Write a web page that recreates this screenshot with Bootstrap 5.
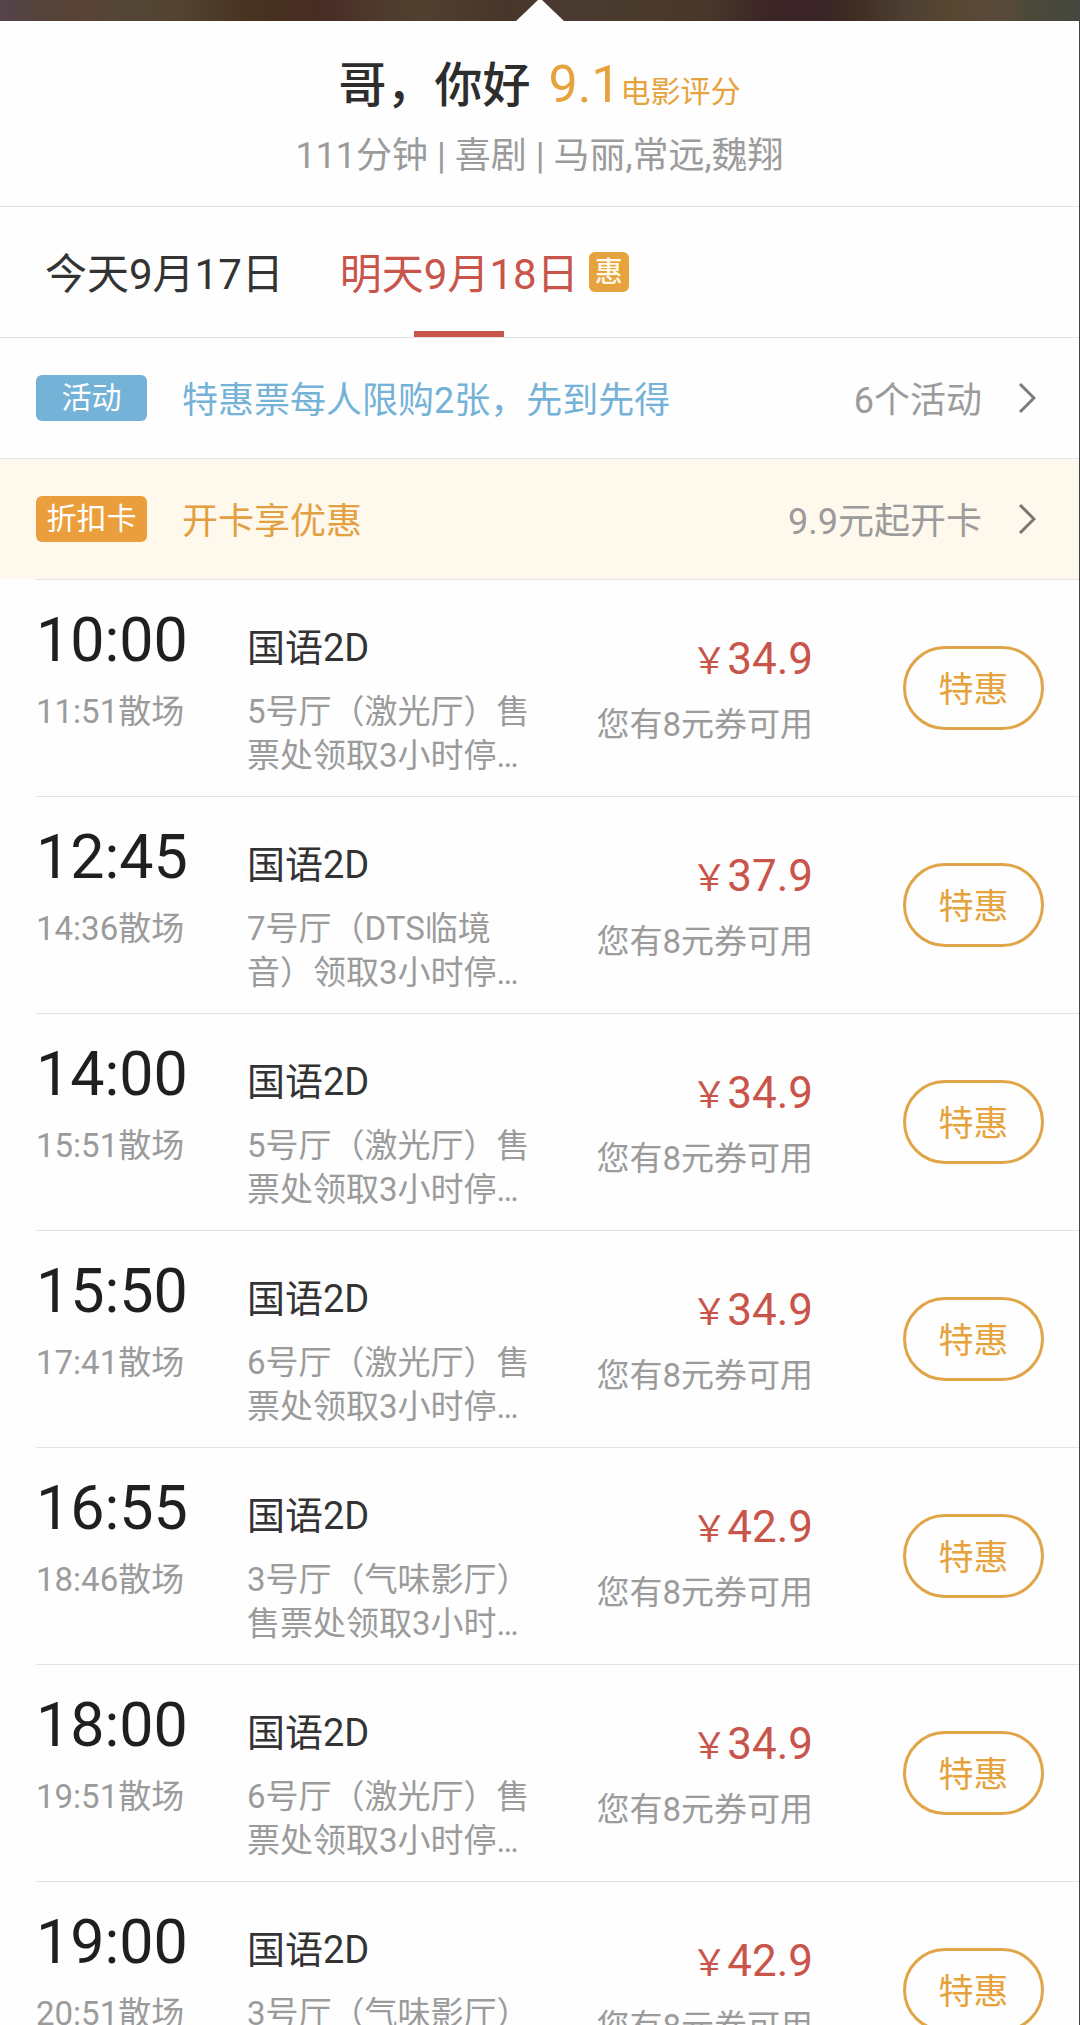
<!DOCTYPE html>
<html lang="zh-CN">
<head>
<meta charset="utf-8">
<meta name="viewport" content="width=device-width, initial-scale=1">
<title>哥，你好 - 场次</title>
<link href="https://cdn.jsdelivr.net/npm/bootstrap@5.3.0/dist/css/bootstrap.min.css" rel="stylesheet">
<style>
  :root { --amber: #e6a23c; --brand-red: #c9544a; --sky: #74b2d8; --rule: #e3e3e3; --soft: #9b9b9b; }
  body { font-family: Roboto, "Noto Sans CJK SC", sans-serif; color: #333; background: #fefefe; font-size: 36px; line-height: 44px; }
  a { text-decoration: none; color: inherit; }
  .screen { border-right: 1px solid #444; }
  .poster-strip { height: 21px; background: linear-gradient(90deg, #54434a 0, #544439 4%, #5a4236 8%, #544637 11%, #524230 17%, #483220 23%, #47301f 26%, #482c26 30%, #4e3a2c 35%, #50402f 39%, #46362a 47%, #4a3a31 53%, #493a2c 60%, #47362a 66%, #3c2526 71%, #3a2428 76%, #3f2c22 79%, #4d3f33 84%, #58462f 88%, #584a3d 93%, #4c4938 95%, #45463f 100%); }
  .poster-strip svg { display: block; width: 48px; height: 21px; }
  .film-head { height: 186px; padding-top: 34px; border-bottom: 1px solid var(--rule); }
  .film-name { font-size: 48px; line-height: 60px; font-weight: 500; margin: 0; color: #2d2d2d; }
  .film-score { font-size: 52px; line-height: 60px; color: var(--amber); margin-left: 18px; }
  .film-score-label { font-size: 30px; color: var(--amber); }
  .film-meta { margin: 18px 0 0; color: var(--soft); }
  .date-tabs { height: 131px; padding: 0 45px; gap: 56px; border-bottom: 1px solid var(--rule); }
  .date-tab { font-size: 42px; height: 130px; position: relative; padding-top: 6px; }
  .date-tab.active { color: var(--brand-red); }
  .date-tab.active::after { content: ""; position: absolute; left: 50%; bottom: 0; width: 90px; height: 6px; margin-left: -45px; background: var(--brand-red); }
  .deal-tag { width: 40px; height: 40px; border-radius: 6px; background: var(--amber); color: #fff8e6; font-size: 28px; font-weight: 500; padding-top: 2px; margin-left: -46px; }
  .promo { height: 121px; padding: 0 43px 0 36px; border-bottom: 1px solid var(--rule); color: var(--soft); }
  .promo-tag { width: 111px; height: 46px; border-radius: 6px; font-size: 30px; color: #fff; margin-right: 35px; }
  .promo-text, .promo-note { padding-top: 6px; }
  .promo svg { width: 18px; height: 32px; margin-left: 36px; }
  .promo-event .promo-tag { background: var(--sky); }
  .promo-event .promo-text { color: var(--sky); }
  .promo-card { height: 120px; background: #fff8ec; border-bottom: 0; }
  .promo-card .promo-tag { background: #eb9f3c; }
  .promo-card .promo-text { color: #e2a040; }
  .shows { margin: 0 0 0 36px; }
  .show { height: 217px; padding-right: 35px; border-top: 1px solid var(--rule); }
  .show-when { width: 211px; padding-top: 24px; }
  .show-start { font-size: 61px; line-height: 72px; color: #1f1f1f; }
  .show-end { font-size: 33px; margin-top: 14px; color: var(--soft); }
  .show-what { width: 290px; padding-top: 46px; }
  .show-lang { font-size: 38px; }
  .show-hall { font-size: 33px; margin-top: 20px; color: var(--soft); }
  .show-cost { padding-top: 57px; margin-right: 90px; }
  .show-price { font-size: 44px; color: var(--brand-red); }
  .show-price small { font-size: 36px; }
  .show-coupon { font-size: 33px; margin-top: 19px; color: var(--soft); }
  .btn-deal { width: 141px; height: 84px; border: 3px solid #dfa548; border-radius: 42px; color: var(--amber); font-size: 35px; line-height: 44px; padding: 6px 0 0; }
  .btn-deal:hover { background: #fff8ec; color: var(--amber); border-color: #dfa548; }
</style>
</head>
<body>
<main class="screen">
  <div class="poster-strip d-flex justify-content-center">
    <svg viewBox="0 0 48 21" aria-hidden="true"><path d="M0 21 22 0h4l22 21z" fill="#fefefe"/></svg>
  </div>

  <header class="film-head text-center">
    <div class="d-flex justify-content-center align-items-baseline">
      <h1 class="film-name">哥，你好</h1>
      <span class="film-score">9.1</span><span class="film-score-label">电影评分</span>
    </div>
    <p class="film-meta">111分钟 | 喜剧 | 马丽,常远,魏翔</p>
  </header>

  <nav class="date-tabs d-flex align-items-center" aria-label="日期">
    <a class="date-tab d-flex align-items-center" href="#today">今天9月17日</a>
    <a class="date-tab d-flex align-items-center active" href="#tomorrow" aria-current="page">明天9月18日</a>
    <span class="deal-tag d-flex align-items-center justify-content-center">惠</span>
  </nav>

  <a class="promo promo-event d-flex align-items-center" href="#events">
    <span class="promo-tag d-flex align-items-center justify-content-center">活动</span>
    <span class="promo-text">特惠票每人限购2张，先到先得</span>
    <span class="promo-note ms-auto">6个活动</span>
    <svg viewBox="0 0 18 32" fill="none" stroke="#7c7c7c" stroke-width="3" aria-hidden="true"><path d="M2 2 16 16 2 30"/></svg>
  </a>
  <a class="promo promo-card d-flex align-items-center" href="#cards">
    <span class="promo-tag d-flex align-items-center justify-content-center">折扣卡</span>
    <span class="promo-text">开卡享优惠</span>
    <span class="promo-note ms-auto">9.9元起开卡</span>
    <svg viewBox="0 0 18 32" fill="none" stroke="#7c7670" stroke-width="3" aria-hidden="true"><path d="M2 2 16 16 2 30"/></svg>
  </a>

  <ul class="shows list-unstyled">
    <li class="show d-flex">
      <div class="show-when flex-shrink-0"><div class="show-start">10:00</div><div class="show-end">11:51散场</div></div>
      <div class="show-what flex-shrink-0"><div class="show-lang">国语2D</div><div class="show-hall">5号厅（激光厅）售票处领取3小时停…</div></div>
      <div class="show-cost flex-grow-1 text-end"><div class="show-price"><small>￥</small>34.9</div><div class="show-coupon">您有8元券可用</div></div>
      <button type="button" class="btn btn-deal align-self-center">特惠</button>
    </li>
    <li class="show d-flex">
      <div class="show-when flex-shrink-0"><div class="show-start">12:45</div><div class="show-end">14:36散场</div></div>
      <div class="show-what flex-shrink-0"><div class="show-lang">国语2D</div><div class="show-hall">7号厅（DTS临境音）领取3小时停…</div></div>
      <div class="show-cost flex-grow-1 text-end"><div class="show-price"><small>￥</small>37.9</div><div class="show-coupon">您有8元券可用</div></div>
      <button type="button" class="btn btn-deal align-self-center">特惠</button>
    </li>
    <li class="show d-flex">
      <div class="show-when flex-shrink-0"><div class="show-start">14:00</div><div class="show-end">15:51散场</div></div>
      <div class="show-what flex-shrink-0"><div class="show-lang">国语2D</div><div class="show-hall">5号厅（激光厅）售票处领取3小时停…</div></div>
      <div class="show-cost flex-grow-1 text-end"><div class="show-price"><small>￥</small>34.9</div><div class="show-coupon">您有8元券可用</div></div>
      <button type="button" class="btn btn-deal align-self-center">特惠</button>
    </li>
    <li class="show d-flex">
      <div class="show-when flex-shrink-0"><div class="show-start">15:50</div><div class="show-end">17:41散场</div></div>
      <div class="show-what flex-shrink-0"><div class="show-lang">国语2D</div><div class="show-hall">6号厅（激光厅）售票处领取3小时停…</div></div>
      <div class="show-cost flex-grow-1 text-end"><div class="show-price"><small>￥</small>34.9</div><div class="show-coupon">您有8元券可用</div></div>
      <button type="button" class="btn btn-deal align-self-center">特惠</button>
    </li>
    <li class="show d-flex">
      <div class="show-when flex-shrink-0"><div class="show-start">16:55</div><div class="show-end">18:46散场</div></div>
      <div class="show-what flex-shrink-0"><div class="show-lang">国语2D</div><div class="show-hall">3号厅（气味影厅）售票处领取3小时…</div></div>
      <div class="show-cost flex-grow-1 text-end"><div class="show-price"><small>￥</small>42.9</div><div class="show-coupon">您有8元券可用</div></div>
      <button type="button" class="btn btn-deal align-self-center">特惠</button>
    </li>
    <li class="show d-flex">
      <div class="show-when flex-shrink-0"><div class="show-start">18:00</div><div class="show-end">19:51散场</div></div>
      <div class="show-what flex-shrink-0"><div class="show-lang">国语2D</div><div class="show-hall">6号厅（激光厅）售票处领取3小时停…</div></div>
      <div class="show-cost flex-grow-1 text-end"><div class="show-price"><small>￥</small>34.9</div><div class="show-coupon">您有8元券可用</div></div>
      <button type="button" class="btn btn-deal align-self-center">特惠</button>
    </li>
    <li class="show d-flex">
      <div class="show-when flex-shrink-0"><div class="show-start">19:00</div><div class="show-end">20:51散场</div></div>
      <div class="show-what flex-shrink-0"><div class="show-lang">国语2D</div><div class="show-hall">3号厅（气味影厅）售票处领取3小时…</div></div>
      <div class="show-cost flex-grow-1 text-end"><div class="show-price"><small>￥</small>42.9</div><div class="show-coupon">您有8元券可用</div></div>
      <button type="button" class="btn btn-deal align-self-center">特惠</button>
    </li>
  </ul>
</main>
<script src="https://cdn.jsdelivr.net/npm/bootstrap@5.3.0/dist/js/bootstrap.bundle.min.js"></script>
</body>
</html>
